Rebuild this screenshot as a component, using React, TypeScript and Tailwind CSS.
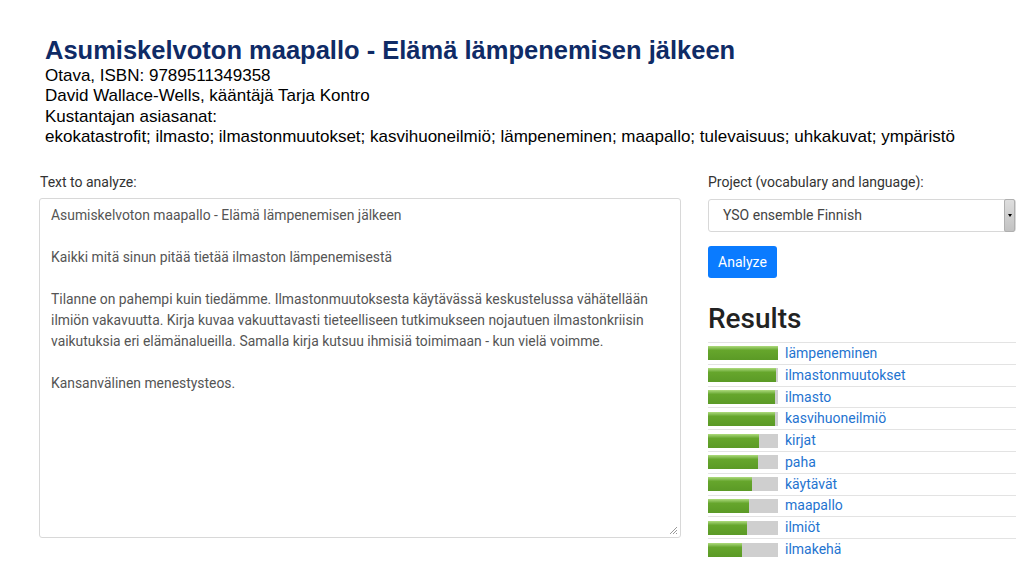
const results = [
  { label: "lämpeneminen", score: 100 },
  { label: "ilmastonmuutokset", score: 97 },
  { label: "ilmasto", score: 96 },
  { label: "kasvihuoneilmiö", score: 96 },
  { label: "kirjat", score: 73 },
  { label: "paha", score: 71 },
  { label: "käytävät", score: 63 },
  { label: "maapallo", score: 58 },
  { label: "ilmiöt", score: 56 },
  { label: "ilmakehä", score: 49 },
];

const keywords =
  "ekokatastrofit; ilmasto; ilmastonmuutokset; kasvihuoneilmiö; lämpeneminen; maapallo; tulevaisuus; uhkakuvat; ympäristö";

const text = `Asumiskelvoton maapallo - Elämä lämpenemisen jälkeen

Kaikki mitä sinun pitää tietää ilmaston lämpenemisestä

Tilanne on pahempi kuin tiedämme. Ilmastonmuutoksesta käytävässä keskustelussa vähätellään ilmiön vakavuutta. Kirja kuvaa vakuuttavasti tieteelliseen tutkimukseen nojautuen ilmastonkriisin vaikutuksia eri elämänalueilla. Samalla kirja kutsuu ihmisiä toimimaan - kun vielä voimme.

Kansanvälinen menestysteos.`;

export default function App() {
  return (
    <main className="w-[1024px] h-[576px] overflow-hidden bg-white">
      <header className="pl-[45px] pt-[36px] font-['Liberation_Sans',Arial,sans-serif] text-black">
        <h1 className="text-[25.5px] leading-[28px] font-bold text-[#0f2b66]">
          Asumiskelvoton maapallo - Elämä lämpenemisen jälkeen
        </h1>
        <div className="pt-[1.5px] text-[17px] leading-[20.5px]">
          <p>Otava, ISBN: 9789511349358</p>
          <p>David Wallace-Wells, kääntäjä Tarja Kontro</p>
          <p>Kustantajan asiasanat:</p>
          <p>{keywords}</p>
        </div>
      </header>

      <section className="flex gap-[27px] pl-[39px] pt-[25.5px] font-['Roboto',sans-serif] text-[#333]">
        <div className="w-[642px]">
          <label className="block pl-px text-[14px] leading-[19px] mb-[6px]">Text to analyze:</label>
          <div className="relative">
            <textarea
              readOnly
              value={text}
              className="block w-[642px] h-[340px] resize-none rounded-[3px] border border-[#d8d8d8] px-[11px] py-[6px] text-[13.9px] leading-[21px] text-[#555] outline-none"
            />
            <svg className="absolute right-[3px] bottom-[3px]" width="9" height="9" viewBox="0 0 9 9">
              <path d="M8 1 L1 8 M8 4 L4 8 M8 7 L7 8" stroke="#999" strokeWidth="1" />
            </svg>
          </div>
        </div>

        <div className="w-[308px]">
          <label className="block text-[14px] leading-[19px] mb-[7px]">Project (vocabulary and language):</label>
          <div className="flex h-[33px] items-stretch rounded-[3px] border border-[#d8d8d8]">
            <span className="flex-1 flex items-center pl-[14px] text-[14px] text-[#444]">YSO ensemble Finnish</span>
            <span className="w-[11px] my-[-1px] flex items-center justify-center rounded-[2px] bg-gradient-to-b from-[#dedede] to-[#c2c2c2] border border-[#b0b0b0]">
              <span className="border-x-[2.5px] border-x-transparent border-t-[3px] border-t-black" />
            </span>
          </div>
          <button className="mt-[14px] h-[32px] w-[69px] rounded-[3px] bg-[#0a7bff] text-[14px] text-white">
            Analyze
          </button>
          <h2 className="mt-[22px] text-[28px] leading-[38px] font-medium text-[#222]">Results</h2>
          <ul className="mt-[4px]">
            {results.map((r) => (
              <li key={r.label} className="flex h-[21.8px] items-center border-t border-[#e3e3e3]">
                <div className="h-[14px] w-[70px] bg-[#cfcfcf]">
                  <div
                    className="h-full bg-gradient-to-b from-[#aedb7c] from-0% via-[#66a62c] via-30% to-[#5b9a26]"
                    style={{ width: `${r.score}%` }}
                  />
                </div>
                <a className="ml-[7px] text-[14px] text-[#1f74d0]">{r.label}</a>
              </li>
            ))}
          </ul>
        </div>
      </section>
    </main>
  );
}
